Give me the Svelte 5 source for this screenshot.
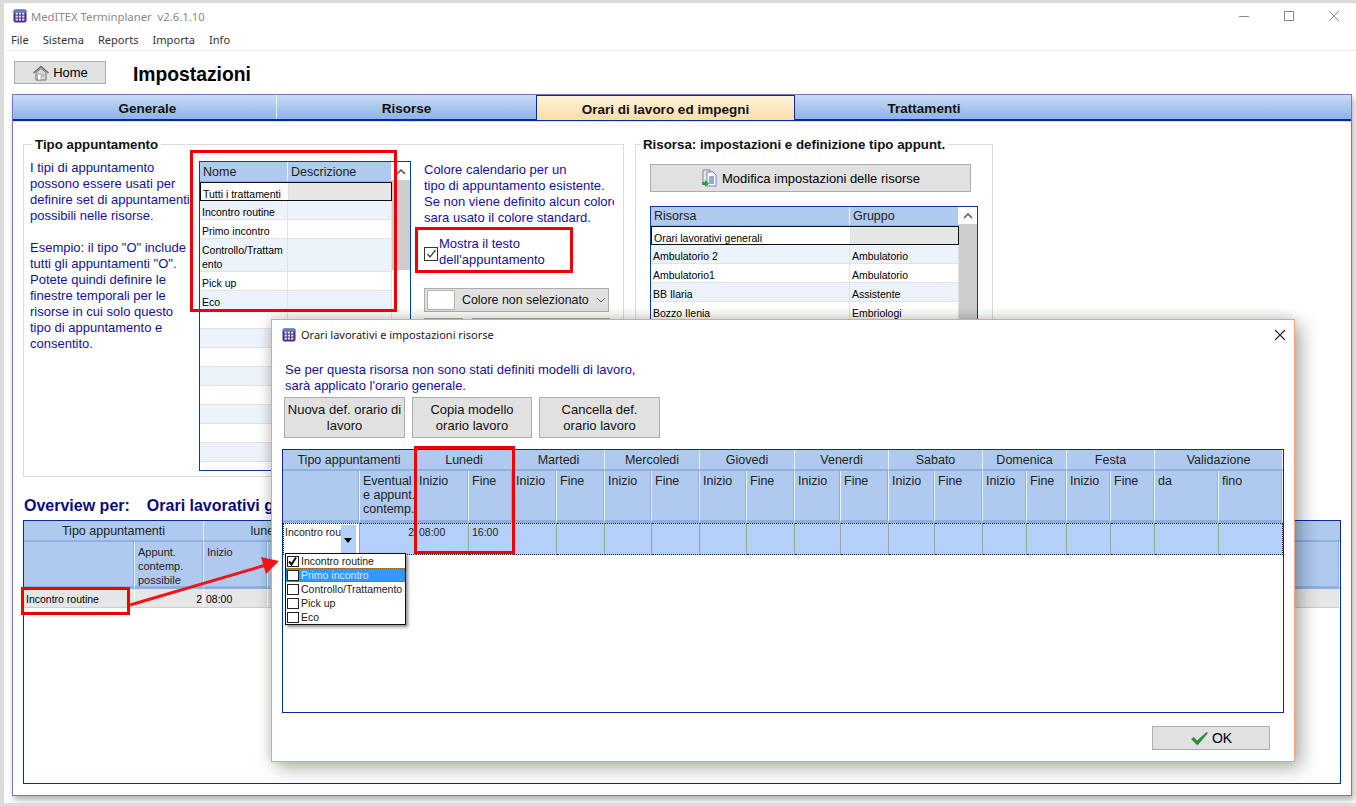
<script>
  const menu = ["File", "Sistema", "Reports", "Importa", "Info"];
  const intro = ["I tipi di appuntamento", "possono essere usati per", "definire set di appuntamenti", "possibili nelle risorse.", "", "Esempio: il tipo \"O\" include", "tutti gli appuntamenti \"O\".", "Potete quindi definire le", "finestre temporali per le", "risorse in cui solo questo", "tipo di appuntamento e", "consentito."];
  const types = ["Incontro routine", "Primo incontro", "Controllo/Trattam ento", "Pick up", "Eco"];
  const resources = [
    ["Ambulatorio 2", "Ambulatorio"],
    ["Ambulatorio1", "Ambulatorio"],
    ["BB Ilaria", "Assistente"],
    ["Bozzo Ilenia", "Embriologi"],
  ];
  const days = ["Lunedi", "Martedi", "Mercoledi", "Giovedi", "Venerdi", "Sabato", "Domenica", "Festa"];
  const picks = ["Incontro routine", "Primo incontro", "Controllo/Trattamento", "Pick up", "Eco"];
</script>

{#snippet appIcon()}
  <svg class="app-icon" viewBox="0 0 14 14" width="14" height="14">
    <rect x="0.5" y="0.5" width="13" height="13" rx="2" fill="#4a2f86" />
    <rect x="0.5" y="0.5" width="13" height="3" rx="1.5" fill="#5d7fc4" />
    {#each [3, 6, 9] as y}
      {#each [2.5, 5.8, 9.1] as x}
        <rect {x} y={y + 0.6} width="2.3" height="2" fill="#e4dcf4" />
      {/each}
    {/each}
  </svg>
{/snippet}

<div class="window">
  <div class="titlebar">
    {@render appIcon()}
    <span class="title">MedITEX Terminplaner&nbsp; v2.6.1.10</span>
    <div class="controls">
      <svg width="12" height="12" viewBox="0 0 12 12"><path d="M1 6.5h10" stroke="#8a8a8a" /></svg>
      <svg width="12" height="12" viewBox="0 0 12 12"><rect x="1.5" y="1.5" width="9" height="9" fill="none" stroke="#8a8a8a" /></svg>
      <svg width="12" height="12" viewBox="0 0 12 12"><path d="M1 1l10 10M11 1L1 11" stroke="#8a8a8a" /></svg>
    </div>
  </div>
  <div class="menubar">
    {#each menu as m}<span>{m}</span>{/each}
  </div>
  <div class="toolbar">
    <button class="btn home">
      <svg width="18" height="16" viewBox="0 0 18 16">
        <path d="M1.5 8L9 1.5 16.500 8" fill="none" stroke="#6a6a6a" stroke-width="1.500" />
        <path d="M4 7.500L9 3.500l5 4V15H4z" fill="#d8d8d8" stroke="#777" />
        <rect x="5.500" y="9" width="3.500" height="6" fill="#fff" stroke="#888" stroke-width="0.600" />
        <rect x="10" y="9" width="2.500" height="2.500" fill="#9fb9dd" />
      </svg>
      Home
    </button>
    <h1>Impostazioni</h1>
  </div>

  <div class="panel">
    <div class="tabs">
      <div class="tab t1">Generale</div>
      <div class="tab t2">Risorse</div>
      <div class="tab t3">Orari di lavoro ed impegni</div>
      <div class="tab t4">Trattamenti</div>
    </div>

    <div class="groups">
      <fieldset class="group left">
        <legend>Tipo appuntamento</legend>
        <div class="left-inner">
          <div class="intro">
            {#each intro as line}<div class="line">{line}</div>{/each}
          </div>

          <div class="list type-list">
            <div class="list-body">
              <div class="list-head">
                <div class="c-name">Nome</div>
                <div class="c-desc">Descrizione</div>
              </div>
              <div class="row selected">
                <div class="c-name">Tutti i trattamenti</div>
                <div class="c-desc"></div>
              </div>
              {#each types as t, i}
                <div class="row" class:alt={i % 2 === 0} class:tall={i === 2}>
                  <div class="c-name">{t}</div>
                  <div class="c-desc"></div>
                </div>
              {/each}
              {#each Array(8) as _, i}
                <div class="row" class:alt={i % 2 === 1}>
                  <div class="c-name"></div>
                  <div class="c-desc"></div>
                </div>
              {/each}
            </div>
            <div class="scroll">
              <svg width="10" height="6" viewBox="0 0 10 6"><path d="M1 5l4-4 4 4" fill="none" stroke="#555" stroke-width="1.500" /></svg>
              <div class="thumb"></div>
            </div>
          </div>

          <div class="color-col">
            <div class="color-text">
              Colore calendario per un<br />tipo di appuntamento esistente.<br />Se non viene definito alcun colore<br />sara usato il colore standard.
            </div>
            <label class="check">
              <span class="box">
                <svg width="11" height="11" viewBox="0 0 11 11"><path d="M1.500 6l2.500 3 5.500-7" fill="none" stroke="#444" stroke-width="1.300" /></svg>
              </span>
              <span>Mostra il testo<br />dell'appuntamento</span>
            </label>
            <div class="combo">
              <span class="swatch"></span>
              <span>Colore non selezionato</span>
              <svg width="10" height="6" viewBox="0 0 10 6"><path d="M1 1l4 4 4-4" fill="none" stroke="#666" /></svg>
            </div>
            <div class="under-combo">
              <div class="btn small"></div>
              <div class="btn wide"></div>
            </div>
          </div>
        </div>
      </fieldset>

      <fieldset class="group right">
        <legend>Risorsa: impostazioni e definizione tipo appunt.</legend>
        <button class="btn modify">
          <svg width="18" height="18" viewBox="0 0 18 18">
            <path d="M2 1h7v13H2z" fill="#e4e4e4" stroke="#888" />
            <path d="M6 3h6l3 3v11H6z" fill="#fff" stroke="#6f87b0" />
            <path d="M8 8h5M8 10h5M8 12h5M8 14h5" stroke="#2f55a8" />
            <path d="M1 13h3v-2l4 3.500-4 3.500v-2H1z" fill="#2e9a40" />
          </svg>
          Modifica impostazioni delle risorse
        </button>
        <div class="list res-list">
          <div class="list-body">
            <div class="list-head">
              <div class="c-res">Risorsa</div>
              <div class="c-grp">Gruppo</div>
            </div>
            <div class="row selected res-first">
              <div class="c-res">Orari lavorativi generali</div>
              <div class="c-grp"></div>
            </div>
            {#each resources as r, i}
              <div class="row" class:alt={i % 2 === 0}>
                <div class="c-res">{r[0]}</div>
                <div class="c-grp">{r[1]}</div>
              </div>
            {/each}
          </div>
          <div class="scroll">
            <svg width="10" height="6" viewBox="0 0 10 6"><path d="M1 5l4-4 4 4" fill="none" stroke="#555" stroke-width="1.500" /></svg>
            <div class="thumb"></div>
          </div>
        </div>
      </fieldset>
    </div>

    <div class="overview-title">
      <span>Overview per:</span>
      <span>Orari lavorativi generali</span>
    </div>
    <div class="overview">
      <div class="ov-grid">
        <div class="hd span2">Tipo appuntamenti</div>
        <div class="hd span2">lunedì</div>
        <div class="hd rest"></div>
        <div class="hd sub"></div>
        <div class="hd sub left-text">Appunt.<br />contemp.<br />possibile</div>
        <div class="hd sub left-text">Inizio</div>
        <div class="hd sub left-text">Fine</div>
        <div class="hd sub rest"></div>
        <div class="ov-cell">Incontro routine</div>
        <div class="ov-cell num">2</div>
        <div class="ov-cell">08:00</div>
        <div class="ov-cell">16:00</div>
        <div class="ov-cell"></div>
      </div>
    </div>
  </div>

  <div class="dialog">
    <div class="dlg-title">
      {@render appIcon()}
      <span>Orari lavorativi e impostazioni risorse</span>
      <svg class="dlg-close" width="12" height="12" viewBox="0 0 12 12"><path d="M1 1l10 10M11 1L1 11" stroke="#222" stroke-width="1.100" /></svg>
    </div>
    <div class="dlg-text">
      Se per questa risorsa non sono stati definiti modelli di lavoro,<br />sarà applicato l'orario generale.
    </div>
    <div class="dlg-buttons">
      <button class="btn b1">Nuova def. orario di<br />lavoro</button>
      <button class="btn b2">Copia modello<br />orario lavoro</button>
      <button class="btn b3">Cancella def.<br />orario lavoro</button>
    </div>
    <div class="sched">
      <div class="sched-grid">
        <div class="hd span2">Tipo appuntamenti</div>
        {#each days as d}<div class="hd span2">{d}</div>{/each}
        <div class="hd span2">Validazione</div>

        <div class="hd sub"></div>
        <div class="hd sub left-text">Eventual<br />e appunt.<br />contemp.</div>
        {#each days as _}
          <div class="hd sub left-text">Inizio</div>
          <div class="hd sub left-text">Fine</div>
        {/each}
        <div class="hd sub left-text">da</div>
        <div class="hd sub left-text">fino</div>

        <div class="cell picker">
          <span class="picker-text">Incontro routine</span>
          <span class="picker-arrow"></span>
        </div>
        <div class="cell num">2</div>
        <div class="cell">08:00</div>
        <div class="cell">16:00</div>
        {#each Array(16) as _}<div class="cell"></div>{/each}
      </div>

      <div class="dropdown">
        {#each picks as p, i}
          <div class="pick" class:hot={i === 1}>
            <span class="pick-box">
              {#if i === 0}
                <svg width="9" height="9" viewBox="0 0 9 9"><path d="M1 4.500l2.500 3 4.500-7" fill="none" stroke="#111" stroke-width="2" /></svg>
              {/if}
            </span>
            {p}
          </div>
        {/each}
      </div>
    </div>
    <div class="dlg-foot">
      <button class="btn ok">
        <svg width="19" height="15" viewBox="0 0 19 15"><path d="M1 8l3-2 3 3.500L16.500 1 18 2 7.500 14.500z" fill="#2f8f3a" /></svg>
        OK
      </button>
    </div>
  </div>

  <!-- red markers drawn on top of the screenshot -->
  <div class="mark m-list"></div>
  <div class="mark m-check"></div>
  <div class="mark m-day"></div>
  <div class="mark m-type"></div>
  <svg class="arrow" width="1356" height="806" viewBox="0 0 1356 806">
    <path d="M130 605L266 565" stroke="#f01414" stroke-width="3" />
    <path d="M279 561L261 557L266 574z" fill="#f01414" />
  </svg>
</div>

<style>
  :global(body) {
    margin: 0;
    background: #dcdcdc;
    font-family: "Liberation Sans", Arial, sans-serif;
    font-size: 13px;
    color: #000;
    overflow: hidden;
  }

  .window {
    position: relative;
    width: 1352px;
    height: 800px;
    margin: 3px 0 0 4px;
    background: #fff;
    box-sizing: border-box;
  }

  .titlebar {
    display: flex;
    align-items: center;
    height: 26px;
    padding-left: 9px;
    gap: 4px;
    color: #8a8a8a;
    font-family: "Noto Sans", sans-serif;
    font-size: 11.300px;
  }
  .app-icon { flex: none; }
  .controls {
    display: flex;
    gap: 33px;
    margin-left: auto;
    margin-right: 16px;
  }
  .menubar {
    display: flex;
    gap: 14px;
    height: 22px;
    align-items: center;
    padding-left: 7px;
    font-family: "Noto Sans", sans-serif;
    font-size: 11.100px;
    color: #333;
    border-bottom: 1px solid #eee;
    box-sizing: border-box;
  }
  .toolbar {
    display: flex;
    align-items: center;
    height: 43px;
    padding-left: 10px;
    box-sizing: border-box;
  }
  h1 {
    margin: 4px 0 0 27px;
    font-size: 19.300px;
    font-weight: bold;
  }

  .btn {
    display: flex;
    align-items: center;
    justify-content: center;
    background: #e1e1e1;
    border: 1px solid #adadad;
    font: inherit;
    color: #000;
    box-sizing: border-box;
    padding: 0;
  }
  .home {
    width: 92px;
    height: 23px;
    gap: 3px;
  }

  .panel {
    position: relative;
    width: 1340px;
    height: 702px;
    margin-left: 8px;
    border: 1px solid #7878c0;
    box-sizing: border-box;
    box-shadow: 2px 4px 6px rgba(0, 0, 0, 0.3);
    background: #fff;
  }
  .tabs {
    display: flex;
    height: 26px;
    background: linear-gradient(#c9dcf6, #8fb2e7);
    border-bottom: 2px solid #0a2a9a;
    box-shadow: 0 1px 0 #ffd9a8;
    box-sizing: border-box;
    font-size: 13.500px;
    font-weight: bold;
    color: #111;
  }
  .tab {
    display: flex;
    align-items: center;
    justify-content: center;
    box-sizing: border-box;
    padding-top: 2px;
  }
  .t1 { width: 264px; padding-left: 6px; border-right: 1px solid #e6effb; }
  .t2 { width: 259px; }
  .t3 {
    width: 259px;
    background: linear-gradient(#fff3dc, #ffdca6);
    border: 1px solid #0a2a9a;
    border-bottom: none;
    height: 25px;
  }
  .t4 { width: 256px; padding-left: 2px; }

  .groups {
    display: flex;
    gap: 11px;
    margin: 16px 0 0 10px;
    height: 363px;
    align-items: flex-start;
  }
  .group {
    margin: 0;
    padding: 0;
    border: 1px solid #dcdcdc;
    box-sizing: border-box;
  }
  legend {
    font-size: 13.300px;
    font-weight: bold;
    padding: 0 3px;
    color: #111;
  }
  .left {
    width: 601px;
    height: 340px;
  }
  .left legend { margin-left: 8px; }
  .left-inner {
    display: flex;
    padding-top: 8px;
  }
  .intro {
    width: 160px;
    margin: 0 0 0 6px;
    overflow: hidden;
    white-space: nowrap;
    color: #1410a0;
    line-height: 16px;
  }
  .line { height: 16px; }

  .list {
    display: flex;
    border: 1px solid #0a3a9a;
    box-sizing: border-box;
    background: #fff;
    overflow: hidden;
    font-size: 10.500px;
  }
  .list-body { flex: 1; min-width: 0; }
  .list-head {
    display: flex;
    height: 20px;
    background: #afcaee;
    border-bottom: 1px solid #8fb0e0;
    box-sizing: border-box;
    align-items: center;
    font-size: 12.500px;
    color: #222;
  }
  .list-head > div {
    padding-left: 3px;
    height: 100%;
    line-height: 20px;
    box-sizing: border-box;
    border-right: 1px solid #f0f5fc;
  }
  .row {
    display: flex;
    height: 19px;
    background: #fff;
    border-bottom: 1px solid #e2e2e2;
    box-sizing: border-box;
  }
  .row > div {
    padding: 4px 1px 0 2px;
    box-sizing: border-box;
    border-right: 1px solid #e2e2e2;
    line-height: 14px;
  }
  .row.alt { background: #edf3fb; }
  .row.tall { height: 33px; }
  .row.selected {
    height: 19px;
    border: 1px solid #111;
    background: #e6e6e6;
  }
  .row.selected > div:first-child { background: #fff; }
  .c-name { width: 88px; word-break: break-all; }
  .c-desc { flex: 1; }
  .row .c-name { width: 88px; }
  .c-res { width: 199px; }
  .c-grp { flex: 1; }
  .scroll {
    width: 18px;
    flex: none;
    background: #fff;
    display: flex;
    flex-direction: column;
    align-items: center;
  }
  .scroll svg { margin: 7px 0 5px; flex: none; }
  .thumb {
    width: 100%;
    height: 90px;
    background: #cdcdcd;
  }

  .type-list {
    width: 212px;
    height: 310px;
    margin: 1px 0 0 9px;
  }

  .color-col {
    width: 190px;
    margin: 2px 0 0 13px;
    color: #1410a0;
    line-height: 16px;
  }
  .color-text {
    white-space: nowrap;
    overflow: hidden;
  }
  .check {
    display: flex;
    align-items: center;
    gap: 1px;
    margin-top: 10px;
    height: 32px;
  }
  .box {
    display: flex;
    align-items: center;
    justify-content: center;
    width: 12px;
    height: 12px;
    border: 1px solid #333;
    margin-top: 3px;
  }
  .combo {
    display: flex;
    align-items: center;
    width: 185px;
    height: 24px;
    margin-top: 20px;
    background: #e1e1e1;
    border: 1px solid #adadad;
    box-sizing: border-box;
    color: #111;
    gap: 7px;
    padding-left: 2px;
    font-size: 12.400px;
  }
  .swatch {
    width: 28px;
    height: 20px;
    background: #fff;
    border: 1px solid #b5b5b5;
    box-sizing: border-box;
  }
  .under-combo {
    display: flex;
    gap: 9px;
    margin-top: 6px;
  }
  .under-combo .small { width: 39px; height: 24px; }
  .under-combo .wide { width: 138px; height: 24px; }

  .right {
    width: 357px;
    height: 340px;
    padding: 0 14px;
  }
  .right legend { margin-left: -10px; }
  .modify {
    width: 321px;
    height: 28px;
    margin-top: 12px;
    gap: 3px;
  }
  .res-list {
    width: 328px;
    height: 200px;
    margin-top: 14px;
  }
  .res-list .list-head { height: 19px; }
  .res-list .list-head > div { line-height: 19px; }
  .res-list .thumb { height: 160px; }
  .res-list .scroll svg { margin: 6px 0 5px; }

  .overview-title {
    display: flex;
    gap: 17px;
    margin: -3px 0 0 11px;
    font-size: 16px;
    font-weight: bold;
    color: #0a0a80;
  }
  .overview {
    width: 1318px;
    height: 264px;
    margin: 5px 0 0 10px;
    border: 1px solid #0a2a9a;
    box-sizing: border-box;
  }
  .ov-grid {
    display: grid;
    grid-template-columns: 111px 69px 64px 64px 1fr;
    grid-template-rows: 21px 47px 19px;
  }

  .hd {
    background: #afcaee;
    border-right: 1px solid #e8f0fb;
    border-bottom: 2px solid #90b0e2;
    box-sizing: border-box;
    text-align: center;
    color: #222;
    font-size: 12.500px;
    line-height: 21px;
    overflow: hidden;
    white-space: nowrap;
  }
  .span2 { grid-column: span 2; }
  .hd.sub {
    border-bottom: 3px solid #90b0e2;
    border-right: 1px solid #eef4fc;
    box-shadow: inset -1px 0 0 #8fb0e0;
  }
  .hd.left-text {
    text-align: left;
    padding: 3px 0 0 3px;
    line-height: 14px;
  }
  .ov-grid .hd.left-text { font-size: 11px; }
  .rest { border-right: none; }
  .ov-cell {
    background: #e6e6e6;
    border-right: 1px solid #fff;
    border-bottom: 1px solid #cfcfcf;
    box-sizing: border-box;
    padding: 3px 2px;
    font-size: 10.500px;
    line-height: 14px;
  }
  .ov-cell.num { padding-right: 1px; }
  .num { text-align: right; }

  .dialog {
    position: absolute;
    left: 267px;
    top: 316px;
    width: 1024px;
    height: 443px;
    background: #fff;
    border: 1px solid #f0a080;
    box-sizing: border-box;
    box-shadow: 6px 6px 18px rgba(0, 0, 0, 0.32), -2px -2px 10px rgba(0, 0, 0, 0.12);
  }
  .dlg-title {
    display: flex;
    align-items: center;
    gap: 5px;
    height: 29px;
    padding-left: 10px;
    font-family: "Noto Sans", sans-serif;
    font-size: 11px;
    color: #222;
  }
  .dlg-close { margin-left: auto; margin-right: 8px; }
  .dlg-text {
    margin: 13px 0 0 13px;
    height: 32px;
    color: #1410a0;
    line-height: 16px;
  }
  .dlg-buttons {
    display: flex;
    gap: 7px;
    margin: 3px 0 0 12px;
  }
  .dlg-buttons .btn {
    height: 41px;
    line-height: 16px;
    text-align: center;
    color: #111;
  }
  .b1 { width: 121px; }
  .b2 { width: 120px; }
  .b3 { width: 121px; }

  .sched {
    position: relative;
    width: 1002px;
    height: 264px;
    margin: 11px 0 0 10px;
    border: 1px solid #0a2a9a;
    box-sizing: border-box;
  }
  .sched-grid {
    display: grid;
    grid-template-columns: 77px 56px 53px 44px 44px 48px 47px 48px 47px 48px 46px 48px 46px 48px 44px 40px 44px 44px 64px 1fr;
    grid-template-rows: 21px 52px 32px;
  }
  .cell {
    background: #b3d0fb;
    border-right: 1px solid #a0a0a0;
    border-top: 1px dotted #222;
    border-bottom: 1px dotted #222;
    box-sizing: border-box;
    padding: 1px 3px 0;
    font-size: 10.500px;
    line-height: 14px;
    color: #222;
  }
  .cell.num { padding-right: 1px; }
  .cell:last-child { border-right: 1px dotted #222; }
  .picker {
    display: flex;
    padding: 0;
    background: #fff;
    border-left: 1px dotted #222;
    overflow: hidden;
    white-space: nowrap;
  }
  .picker-text {
    width: 57px;
    overflow: hidden;
    flex: none;
    padding: 1px 0 0 1px;
    box-sizing: border-box;
  }
  .picker-arrow {
    position: relative;
    flex: none;
    width: 15px;
    height: 28px;
    margin-top: 1px;
    background: #b3d0fb;
  }
  .picker-arrow::after {
    content: "";
    position: absolute;
    left: 3px;
    top: 13px;
    border: 4.500px solid transparent;
    border-top: 5px solid #000;
  }

  .dropdown {
    position: absolute;
    left: 2px;
    top: 103px;
    width: 121px;
    height: 72px;
    padding: 0;
    background: #fff;
    border: 1px solid #111;
    box-sizing: border-box;
    box-shadow: 2px 2px 3px rgba(0, 0, 0, 0.45);
    font-size: 10.500px;
  }
  .pick {
    display: flex;
    align-items: center;
    gap: 2px;
    height: 14px;
    padding-left: 1px;
    white-space: nowrap;
    color: #222;
  }
  .pick.hot {
    background: #3399ff;
    color: #d5e8fb;
    outline: 1px dotted #a06010;
    outline-offset: -1px;
  }
  .pick-box {
    display: flex;
    flex: none;
    width: 9px;
    height: 9px;
    padding: 0 1px 0 0;
    background: #fff;
    border: 1px solid #222;
    box-sizing: content-box;
  }

  .dlg-foot {
    display: flex;
    justify-content: flex-end;
    margin: 13px 24px 0 0;
  }
  .ok {
    width: 118px;
    height: 24px;
    gap: 3px;
    font-size: 14px;
  }

  .mark {
    position: absolute;
    border: 3px solid #f00000;
    box-sizing: border-box;
  }
  .m-list { left: 186px; top: 147px; width: 207px; height: 162px; }
  .m-check { left: 411px; top: 224px; width: 158px; height: 46px; }
  .m-day { left: 410px; top: 443px; width: 101px; height: 108px; }
  .m-type { left: 17px; top: 584px; width: 109px; height: 28px; }
  .arrow {
    position: absolute;
    left: -4px;
    top: -3px;
    pointer-events: none;
  }
</style>
